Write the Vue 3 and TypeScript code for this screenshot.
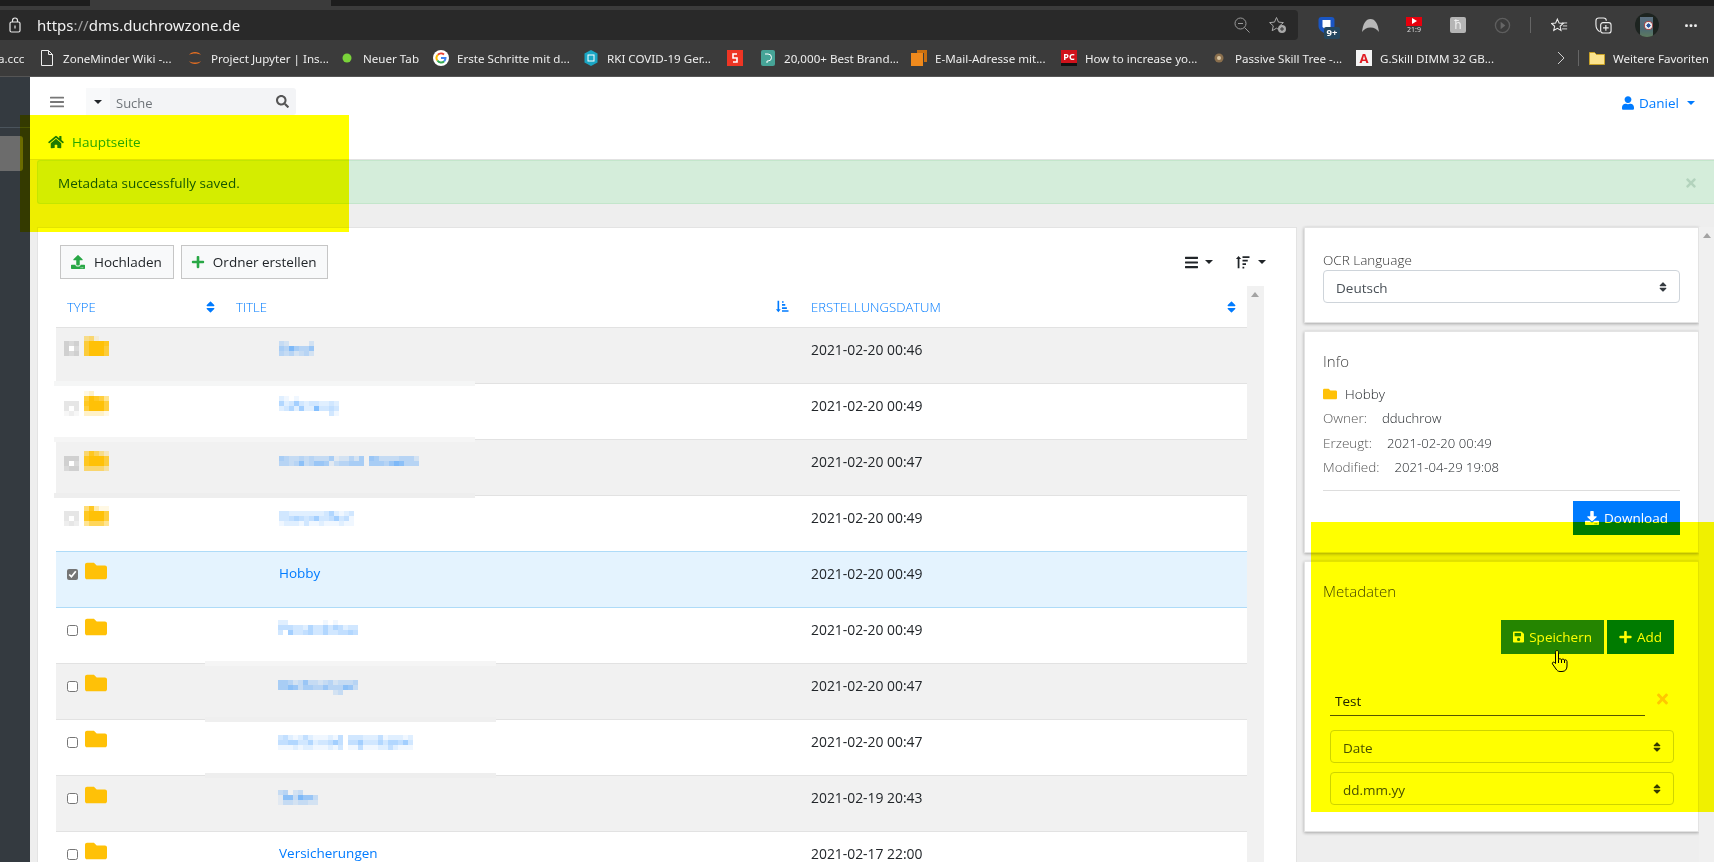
<template>
  <div class="screen">
    <!-- browser chrome -->
    <header class="chrome">
      <div class="tabs">
        <span class="tab-dark tab-first" />
        <span class="tab-active" />
        <span class="tab-dark" />
      </div>
      <div class="toolbar">
        <div class="address">
          <svg class="lock" viewBox="0 0 12 16"><rect x="1" y="5" width="10" height="10" rx="1.5" fill="none" stroke="#e8e8e8" stroke-width="1.2" /><path d="M3.5 5V3.5a2.5 2.5 0 0 1 5 0V5" fill="none" stroke="#e8e8e8" stroke-width="1.2" /><rect x="5.4" y="8.5" width="1.2" height="3" fill="#e8e8e8" /></svg>
          <span class="url">https<span class="url-dim">://</span>dms.duchrowzone.de</span>
          <svg class="addr-zoom" viewBox="0 0 16 16"><circle cx="6.5" cy="6.5" r="5.5" fill="none" stroke="#9a9a9a" /><path d="M4 6.5h5M10.5 10.5l5 5" stroke="#9a9a9a" fill="none" /></svg>
          <svg class="addr-star" viewBox="0 0 18 18"><path d="M7.5 1.5l2 4.6 4.9.5-3.7 3.3 1.1 4.8-4.3-2.5-4.3 2.5 1.1-4.8L.6 6.6l4.9-.5z" fill="none" stroke="#a8a8a8" /><circle cx="13" cy="13" r="4" fill="#a8a8a8" /><path d="M11 13h4M13 11v4" stroke="#333" /></svg>
        </div>
        <div class="ext-icons">
          <span class="ext">
            <svg viewBox="0 0 16 17" class="ext-svg"><path d="M3 0h10a3 3 0 0 1 3 3v6c0 4-4 6.500-8 8-4-1.500-8-4-8-8V3a3 3 0 0 1 3-3z" fill="#1a56c4" /><path d="M4 3h8v7l-4 3-4-3z" fill="#fff" /></svg>
            <span class="ext-badge">9+</span>
          </span>
          <span class="ext"><svg viewBox="0 0 18 16" class="ext-svg"><path d="M0 15C1 6 4 1 9 1s8 5 9 14c-2-3-5-5-9-5s-7 2-9 5z" fill="#b8b8b8" /></svg></span>
          <span class="ext">
            <span class="yt"><span class="yt-head"><i /></span><span class="yt-num">21:9</span></span>
          </span>
          <span class="ext"><span class="h-icon">ћ</span></span>
          <span class="ext"><svg viewBox="0 0 18 18" class="ext-svg"><circle cx="9" cy="9" r="7.5" fill="none" stroke="#5e5e5e" stroke-width="1.4" /><path d="M7 5l5 4-5 4z" fill="#666" /></svg></span>
          <span class="ext-sep" />
          <span class="ext"><svg viewBox="0 0 20 18" class="ext-svg"><path d="M7.5 1.5l2 4.6 4.9.5-3.7 3.3 1.1 4.8-4.3-2.5-4.3 2.5 1.1-4.8L.6 6.6l4.9-.5z" fill="none" stroke="#eee" stroke-width="1.2" /><path d="M13 6h6M14 9.500h5M13 13h6" stroke="#eee" /></svg></span>
          <span class="ext"><svg viewBox="0 0 18 18" class="ext-svg"><path d="M5 15.500C2 14 1 12 1 8V4a3 3 0 0 1 3-3h5a3 3 0 0 1 3 3" fill="none" stroke="#eee" stroke-width="1.2" /><rect x="6" y="6" width="11" height="11" rx="2.500" fill="#3b3b3b" stroke="#eee" stroke-width="1.2" /><path d="M11.500 8.500v6M8.500 11.500h6" stroke="#eee" stroke-width="1.2" /></svg></span>
          <span class="ext"><span class="avatar"><i class="avatar-body" /><i class="avatar-shield" /></span></span>
          <span class="ext dots">···</span>
        </div>
      </div>
      <div class="favorites">
        <div class="fav-list">
          <span class="fav fav-clip">a.ccc</span>
          <span v-for="fav in favorites" :key="fav.icon" class="fav" :style="{ width: fav.width + 'px' }">
            <svg v-if="fav.icon === 'doc'" class="fav-icon" viewBox="0 0 16 16"><path d="M2.500.500h7l4 4v11h-11z" fill="none" stroke="#eee" /><path d="M9.500.500v4h4" fill="none" stroke="#eee" /></svg>
            <svg v-else-if="fav.icon === 'jupyter'" class="fav-icon" viewBox="0 0 16 16"><path d="M2 5c2-4 10-4 12 0-3-2-9-2-12 0zM2 11c2 4 10 4 12 0-3 2-9 2-12 0z" fill="#e66f22" /></svg>
            <svg v-else-if="fav.icon === 'dot'" class="fav-icon" viewBox="0 0 16 16"><circle cx="8" cy="8" r="4.500" fill="#7ad33a" /></svg>
            <svg v-else-if="fav.icon === 'google'" class="fav-icon" viewBox="0 0 16 16"><circle cx="8" cy="8" r="8" fill="#fff" /><path d="M4.900 4.700a4.500 4.500 0 0 1 6.100-.2" fill="none" stroke="#ea4335" stroke-width="2" /><path d="M4.400 10.500a4.500 4.500 0 0 1 .5-5.800" fill="none" stroke="#fbbc05" stroke-width="2" /><path d="M11.200 11.200a4.500 4.500 0 0 1-6.800-.7" fill="none" stroke="#34a853" stroke-width="2" /><path d="M8 8h4.500c0 1.300-.5 2.400-1.300 3.200" fill="none" stroke="#4285f4" stroke-width="2" /></svg>
            <svg v-else-if="fav.icon === 'rki'" class="fav-icon" viewBox="0 0 16 16"><path d="M8 0l6.500 3.500v9L8 16l-6.500-3.500v-9z" fill="#1aa6c4" /><rect x="5" y="5" width="6" height="6" fill="none" stroke="#fff" /></svg>
            <svg v-else-if="fav.icon === 'red'" class="fav-icon" viewBox="0 0 16 16"><rect width="16" height="16" fill="#ee3524" /><path d="M10 4H6v4h4v4H6" fill="none" stroke="#fff" stroke-width="1.600" /></svg>
            <svg v-else-if="fav.icon === 'teal'" class="fav-icon" viewBox="0 0 16 16"><rect x="1" width="14" height="16" rx="2" fill="#46a497" /><path d="M5 4h3a3 3 0 0 1 0 7H7v2" fill="none" stroke="#fff" /></svg>
            <svg v-else-if="fav.icon === 'orange'" class="fav-icon" viewBox="0 0 16 16"><path d="M6 0h10v12h-3V3H6z" fill="#c96f10" /><rect y="3" width="12" height="13" fill="#f08a1d" /></svg>
            <span v-else-if="fav.icon === 'pc'" class="fav-pc">PC</span>
            <svg v-else-if="fav.icon === 'skill'" class="fav-icon" viewBox="0 0 16 16"><circle cx="8" cy="8" r="4.500" fill="#8a6f4d" /><circle cx="8" cy="8" r="2" fill="#d8c4a0" /></svg>
            <span v-else-if="fav.icon === 'adobe'" class="fav-a">A</span>
            <span class="fav-label">{{ fav.label }}</span>
          </span>
        </div>
        <div class="fav-end">
          <svg class="fav-chevron" viewBox="0 0 8 14"><path d="M1 1l6 6-6 6" fill="none" stroke="#d0d0d0" /></svg>
          <span class="fav-sep" />
          <svg class="fav-icon" viewBox="0 0 16 16"><path d="M.500 2.500h5l2 2h8v10h-15z" fill="#fbe38e" stroke="#c9a227" /></svg>
          <span class="fav-label">Weitere Favoriten</span>
        </div>
      </div>
    </header>

    <div class="app">
      <aside class="sidebar">
        <div class="side-line" />
        <div class="side-item" />
      </aside>

      <div class="wrapper">
        <nav class="navbar">
          <svg class="nav-bars" viewBox="0 0 448 512" preserveAspectRatio="none"><path :d="icons.bars" /></svg>
          <div class="search">
            <span class="search-drop"><i class="caret caret-dark" /></span>
            <span class="search-text">Suche</span>
            <svg class="search-icon" viewBox="0 0 512 512"><path :d="icons.search" /></svg>
          </div>
          <a class="user">
            <svg viewBox="0 0 448 512"><path :d="icons.user" /></svg>
            <span>Daniel</span>
            <i class="caret caret-blue" />
          </a>
        </nav>

        <div class="breadcrumb">
          <svg viewBox="0 0 576 512"><path :d="icons.home" /></svg>
          <span>Hauptseite</span>
        </div>

        <div class="content">
          <div class="alert">
            <span>Metadata successfully saved.</span>
            <svg class="alert-close" viewBox="0 0 352 512"><path :d="icons.times" /></svg>
          </div>

          <div class="columns">
            <section class="card main-card">
              <div class="actions">
                <button class="btn-light btn-upload" type="button">
                  <svg class="icon-green" viewBox="0 0 512 512"><path :d="icons.upload" /></svg>
                  Hochladen
                </button>
                <button class="btn-light btn-folder" type="button">
                  <svg class="icon-green" viewBox="0 0 448 512"><path :d="icons.plus" /></svg>
                  Ordner erstellen
                </button>
                <span class="view-tools">
                  <svg class="tool-bars" viewBox="0 0 448 512"><path :d="icons.bars" /></svg>
                  <i class="caret caret-dark" />
                  <svg class="tool-sort" viewBox="0 0 16 16"><path d="M3.500 1l3 3.500H4.500V15h-2V4.500H.500zM8 1.500h8v2H8zM8 5.500h6v2H8zM8 9.500h4v2H8zM8 13.500h2v2H8z" /></svg>
                  <i class="caret caret-dark" />
                </span>
              </div>

              <div class="table-wrap">
                <div class="table">
                  <div class="thead">
                    <div class="th">TYPE<svg class="sort" viewBox="0 0 320 512"><path :d="icons.sort" /></svg></div>
                    <div class="th th-title">TITLE<svg class="sort-desc" viewBox="0 0 16 16"><path d="M3.500 15l3-3.500H4.500V1h-2v10.500H.500zM8 1.500h2v2H8zM8 5h4v2H8zM8 9h6v2H8zM8 12.500h8v2H8z" /></svg></div>
                    <div class="th">ERSTELLUNGSDATUM<svg class="sort" viewBox="0 0 320 512"><path :d="icons.sort" /></svg></div>
                  </div>
                  <div
                    v-for="(row, i) in rows"
                    :key="i"
                    class="tr"
                    :class="{ striped: i % 2 === 0 && !row.selected, selected: row.selected, 'after-selected': row.afterSelected }"
                  >
                    <div class="td td-type">
                      <template v-if="!row.blurType">
                        <input class="check" type="checkbox" :checked="row.selected" />
                        <svg class="folder" viewBox="0 0 512 512"><path :d="icons.folder" /></svg>
                      </template>
                    </div>
                    <div class="td td-title"><a v-if="row.title">{{ row.title }}</a></div>
                    <div class="td td-date">{{ row.date }}</div>
                    <span
                      v-for="(m, j) in row.mosaics"
                      :key="j"
                      class="mosaic"
                      :style="{ left: m.x - 56 + 'px', top: m.y - row.top - 1 + 'px', gridTemplateColumns: `repeat(${m.data[0].length}, 5px)` }"
                    >
                      <i v-for="(c, k) in mosaicCells(m)" :key="k" :style="{ background: c }" />
                    </span>
                    <span
                      v-if="row.patch"
                      class="patch"
                      :style="{ left: row.patch.left + 'px', width: row.patch.width + 'px', background: row.patch.color }"
                    />
                  </div>
                </div>
                <div class="inner-scroll"><i class="scroll-up" /></div>
              </div>
            </section>

            <div class="side-cards">
              <section class="card ocr-card">
                <label class="label">OCR Language</label>
                <div class="select">
                  <span>Deutsch</span>
                  <svg viewBox="0 0 320 512"><path :d="icons.sort" /></svg>
                </div>
              </section>

              <section class="card info-card">
                <h5 class="card-title">Info</h5>
                <div class="info-name">
                  <svg class="folder-small" viewBox="0 0 512 512"><path :d="icons.folder" /></svg>
                  <span>Hobby</span>
                </div>
                <div v-for="item in info" :key="item.label" class="info-line">
                  <span class="info-label">{{ item.label }}</span>
                  <span class="info-value">{{ item.value }}</span>
                </div>
                <hr class="divider" />
                <div class="btn-end">
                  <button class="btn-primary" type="button">
                    <svg viewBox="0 0 512 512"><path :d="icons.download" /></svg>
                    Download
                  </button>
                </div>
              </section>

              <section class="card meta-card">
                <h5 class="card-title">Metadaten</h5>
                <div class="meta-actions">
                  <button class="btn-primary btn-save" type="button">
                    <svg viewBox="0 0 448 512"><path :d="icons.save" /></svg>
                    Speichern
                  </button>
                  <button class="btn-primary btn-add" type="button">
                    <svg viewBox="0 0 448 512"><path :d="icons.plus" /></svg>
                    Add
                  </button>
                </div>
                <div class="meta-form">
                  <div class="meta-name">
                    <span class="meta-input">Test</span>
                    <svg class="meta-x" viewBox="0 0 352 512"><path :d="icons.times" /></svg>
                  </div>
                  <div class="select select-meta">
                    <span>Date</span>
                    <svg viewBox="0 0 320 512"><path :d="icons.sort" /></svg>
                  </div>
                  <div class="select select-meta">
                    <span>dd.mm.yy</span>
                    <svg viewBox="0 0 320 512"><path :d="icons.sort" /></svg>
                  </div>
                </div>
              </section>
            </div>

            <div class="page-scroll"><i class="scroll-up" /></div>
          </div>
        </div>
      </div>
    </div>

    <!-- cursor and marker highlights lie over the screenshot -->
    <svg class="cursor" viewBox="0 0 18 24">
      <path d="M6 1.500c1 0 1.500.7 1.500 1.700v7.300c.5-1 2.500-1 3 .2.700-.9 2.500-.8 3 .4.800-.6 2.500-.2 2.500 1.400v4.500c0 3-1.500 5.500-5 5.500H9c-2 0-3-1-4-2.500L1.500 15c-.8-1.200.8-2.500 2-1.500l1 1V3.200C4.500 2.200 5 1.500 6 1.500z" fill="#fff" stroke="#000" />
      <path d="M7.500 10.500V14M10.500 10.700V14M13.500 11V14" stroke="#000" fill="none" />
    </svg>
    <div class="marker marker-left" />
    <div class="marker marker-right" />
  </div>
</template>

<script setup lang="ts">
interface Mosaic {
  x: number
  y: number
  color: 'blue' | 'amber' | 'grey'
  data: string[]
}

interface Row {
  top: number
  title?: string
  date: string
  selected?: boolean
  afterSelected?: boolean
  blurType?: boolean
  mosaics: Mosaic[]
  patch?: { left: number; width: number; color: string }
}

const icons = {
  bars: 'M16 132h416c8.837 0 16-7.163 16-16V76c0-8.837-7.163-16-16-16H16C7.163 60 0 67.163 0 76v40c0 8.837 7.163 16 16 16zm0 160h416c8.837 0 16-7.163 16-16v-40c0-8.837-7.163-16-16-16H16c-8.837 0-16 7.163-16 16v40c0 8.837 7.163 16 16 16zm0 160h416c8.837 0 16-7.163 16-16v-40c0-8.837-7.163-16-16-16H16c-8.837 0-16 7.163-16 16v40c0 8.837 7.163 16 16 16z',
  search: 'M505 442.7L405.3 343c-4.5-4.5-10.6-7-17-7H372c27.6-35.3 44-79.7 44-128C416 93.1 322.9 0 208 0S0 93.1 0 208s93.1 208 208 208c48.3 0 92.7-16.4 128-44v16.3c0 6.4 2.5 12.5 7 17l99.7 99.7c9.4 9.4 24.6 9.4 33.9 0l28.3-28.3c9.4-9.4 9.4-24.6.1-34zM208 336c-70.7 0-128-57.2-128-128 0-70.7 57.2-128 128-128 70.7 0 128 57.2 128 128 0 70.7-57.2 128-128 128z',
  user: 'M224 256c70.7 0 128-57.3 128-128S294.7 0 224 0 96 57.3 96 128s57.3 128 128 128zm89.6 32h-16.7c-22.2 10.2-46.9 16-72.9 16s-50.6-5.8-72.9-16h-16.7C60.2 288 0 348.2 0 422.4V464c0 26.5 21.5 48 48 48h352c26.5 0 48-21.5 48-48v-41.6c0-74.2-60.2-134.4-134.4-134.4z',
  home: 'M280.37 148.26L96 300.11V464a16 16 0 0 0 16 16l112.06-.29a16 16 0 0 0 15.92-16V368a16 16 0 0 1 16-16h64a16 16 0 0 1 16 16v95.64a16 16 0 0 0 16 16.05L464 480a16 16 0 0 0 16-16V300L295.67 148.26a12.19 12.19 0 0 0-15.3 0zM571.6 251.47L488 182.56V44.05a12 12 0 0 0-12-12h-56a12 12 0 0 0-12 12v72.61L318.47 43a48 48 0 0 0-61 0L4.34 251.47a12 12 0 0 0-1.6 16.9l25.5 31A12 12 0 0 0 45.15 301l235.22-193.74a12.19 12.19 0 0 1 15.3 0L530.9 301a12 12 0 0 0 16.9-1.6l25.5-31a12 12 0 0 0-1.7-16.93z',
  times: 'M242.72 256l100.07-100.07c12.28-12.28 12.28-32.19 0-44.48l-22.24-22.24c-12.28-12.28-32.19-12.28-44.48 0L176 189.28 75.93 89.21c-12.28-12.28-32.19-12.28-44.48 0L9.21 111.45c-12.28 12.28-12.28 32.19 0 44.48L109.28 256 9.21 356.07c-12.28 12.28-12.28 32.19 0 44.48l22.24 22.24c12.28 12.28 32.2 12.28 44.48 0L176 322.72l100.07 100.07c12.28 12.28 32.2 12.28 44.48 0l22.24-22.24c12.28-12.28 12.28-32.19 0-44.48L242.72 256z',
  upload: 'M296 384h-80c-13.3 0-24-10.7-24-24V192h-87.7c-17.8 0-26.7-21.5-14.1-34.1L242.3 5.7c7.5-7.5 19.8-7.5 27.3 0l152.2 152.2c12.6 12.6 3.7 34.1-14.1 34.1H320v168c0 13.3-10.7 24-24 24zm216-8v112c0 13.3-10.7 24-24 24H24c-13.3 0-24-10.7-24-24V376c0-13.3 10.7-24 24-24h136v8c0 30.9 25.1 56 56 56h80c30.9 0 56-25.1 56-56v-8h136c13.3 0 24 10.7 24 24zm-124 88c0-11-9-20-20-20s-20 9-20 20 9 20 20 20 20-9 20-20zm64 0c0-11-9-20-20-20s-20 9-20 20 9 20 20 20 20-9 20-20z',
  download: 'M216 0h80c13.3 0 24 10.7 24 24v168h87.7c17.8 0 26.7 21.5 14.1 34.1L269.7 378.3c-7.5 7.5-19.8 7.5-27.3 0L90.1 226.1c-12.6-12.6-3.7-34.1 14.1-34.1H192V24c0-13.3 10.7-24 24-24zm296 376v112c0 13.3-10.7 24-24 24H24c-13.3 0-24-10.7-24-24V376c0-13.3 10.7-24 24-24h146.7l49 49c20.1 20.1 52.5 20.1 72.6 0l49-49H488c13.3 0 24 10.7 24 24zm-124 88c0-11-9-20-20-20s-20 9-20 20 9 20 20 20 20-9 20-20zm64 0c0-11-9-20-20-20s-20 9-20 20 9 20 20 20 20-9 20-20z',
  plus: 'M416 208H272V64c0-17.67-14.33-32-32-32h-32c-17.67 0-32 14.33-32 32v144H32c-17.67 0-32 14.33-32 32v32c0 17.67 14.33 32 32 32h144v144c0 17.67 14.33 32 32 32h32c17.67 0 32-14.33 32-32V304h144c17.67 0 32-14.33 32-32v-32c0-17.67-14.33-32-32-32z',
  save: 'M433.941 129.941l-83.882-83.882A48 48 0 0 0 316.118 32H48C21.49 32 0 53.49 0 80v352c0 26.51 21.49 48 48 48h352c26.51 0 48-21.49 48-48V163.882a48 48 0 0 0-14.059-33.941zM224 416c-35.346 0-64-28.654-64-64 0-35.346 28.654-64 64-64s64 28.654 64 64c0 35.346-28.654 64-64 64zm96-304.52V212c0 6.627-5.373 12-12 12H76c-6.627 0-12-5.373-12-12V108c0-6.627 5.373-12 12-12h228.52c3.183 0 6.235 1.264 8.485 3.515l3.48 3.48A11.996 11.996 0 0 1 320 111.48z',
  sort: 'M41 288h238c21.4 0 32.1 25.9 17 41L177 448c-9.4 9.4-24.6 9.4-33.9 0L24 329c-15.1-15.1-4.4-41 17-41zm255-105L177 64c-9.4-9.4-24.6-9.4-33.9 0L24 183c-15.1 15.1-4.4 41 17 41h238c21.4 0 32.1-25.9 17-41z',
  folder: 'M464 128H272l-64-64H48C21.49 64 0 85.49 0 112v288c0 26.51 21.49 48 48 48h416c26.51 0 48-21.49 48-48V176c0-26.51-21.49-48-48-48z'
}

// width = distance to the next bookmark in the bar
const favorites = [
  { icon: 'doc', label: 'ZoneMinder Wiki -...', width: 148 },
  { icon: 'jupyter', label: 'Project Jupyter | Ins...', width: 152 },
  { icon: 'dot', label: 'Neuer Tab', width: 94 },
  { icon: 'google', label: 'Erste Schritte mit d...', width: 150 },
  { icon: 'rki', label: 'RKI COVID-19 Ger...', width: 144 },
  { icon: 'red', label: '', width: 33 },
  { icon: 'teal', label: '20,000+ Best Brand...', width: 151 },
  { icon: 'orange', label: 'E-Mail-Adresse mit...', width: 150 },
  { icon: 'pc', label: 'How to increase yo...', width: 150 },
  { icon: 'skill', label: 'Passive Skill Tree -...', width: 145 },
  { icon: 'adobe', label: 'G.Skill DIMM 32 GB...', width: 150 }
]

const info = [
  { label: 'Owner:', value: 'dduchrow' },
  { label: 'Erzeugt:', value: '2021-02-20 00:49' },
  { label: 'Modified:', value: '2021-04-29 19:08' }
]

const rows: Row[] = [
  {
    top: 327,
    date: '2021-02-20 00:46',
    blurType: true,
    patch: { left: -2, width: 421, color: '#f5f6f6' },
    mosaics: [
      { x: 64, y: 341, color: 'grey', data: ['434', '403', '434'] },
      { x: 84, y: 336, color: 'amber', data: ['45100', '79998', '79997', '79997'] },
      { x: 279, y: 341, color: 'blue', data: ['3200002', '5485446', '4342342'] }
    ]
  },
  {
    top: 383,
    date: '2021-02-20 00:49',
    blurType: true,
    patch: { left: -2, width: 421, color: '#f5f5f5' },
    mosaics: [
      { x: 64, y: 401, color: 'grey', data: ['333', '303', '121'] },
      { x: 84, y: 391, color: 'amber', data: ['12000', '79874', '89997', '79997', '22221'] },
      { x: 279, y: 396, color: 'blue', data: ['210100000000', '523632332232', '235262283343', '000000000031'] }
    ]
  },
  {
    top: 439,
    date: '2021-02-20 00:47',
    blurType: true,
    patch: { left: -2, width: 421, color: '#eeeeee' },
    mosaics: [
      { x: 64, y: 456, color: 'grey', data: ['444', '403', '344'] },
      { x: 84, y: 451, color: 'amber', data: ['58642', '89997', '89997', '55553'] },
      { x: 279, y: 456, color: 'blue', data: ['5433434333512242506533334442', '4434734665134455505554687444'] }
    ]
  },
  {
    top: 495,
    date: '2021-02-20 00:49',
    blurType: true,
    mosaics: [
      { x: 64, y: 511, color: 'grey', data: ['333', '303', '232'] },
      { x: 84, y: 506, color: 'amber', data: ['58311', '89997', '89997', '46664'] },
      { x: 279, y: 511, color: 'blue', data: ['332222222352123', '334543463346341', '122213112111211'] }
    ]
  },
  { top: 551, title: 'Hobby', date: '2021-02-20 00:49', selected: true, mosaics: [] },
  {
    top: 607,
    date: '2021-02-20 00:49',
    afterSelected: true,
    patch: { left: 149, width: 291, color: '#f5f5f5' },
    mosaics: [{ x: 278, y: 620, color: 'blue', data: ['2200000001010000', '4443325335354233', '3063345335334454'] }]
  },
  {
    top: 663,
    date: '2021-02-20 00:47',
    patch: { left: 149, width: 291, color: '#efefef' },
    mosaics: [{ x: 278, y: 680, color: 'blue', data: ['5542363323423334', '5576355446444763', '0000000000023000'] }]
  },
  {
    top: 719,
    date: '2021-02-20 00:47',
    patch: { left: 149, width: 291, color: '#eeeeee' },
    mosaics: [
      {
        x: 278,
        y: 735,
        color: 'blue',
        data: ['342124211121403332224122212', '445533523346404463335355463', '111212211121301141112242111']
      }
    ]
  },
  {
    top: 775,
    date: '2021-02-19 20:43',
    mosaics: [{ x: 278, y: 790, color: 'blue', data: ['34023000', '17738663', '13323322'] }]
  },
  { top: 831, title: 'Versicherungen', date: '2021-02-17 22:00', mosaics: [] }
]

// one colour per pixel of a blurred block, digit 0-9 is the strength
const mosaicCells = (m: Mosaic) => {
  const out: string[] = []
  for (const line of m.data) {
    for (const ch of line) {
      const d = Number(ch)
      if (m.color === 'blue') out.push(d === 0 ? 'transparent' : `rgba(0, 123, 255, ${d * 0.06})`)
      else if (m.color === 'amber') out.push(d === 0 ? 'transparent' : `rgba(255, 193, 7, ${d / 9})`)
      else out.push(d === 0 ? '#fff' : `rgba(0, 0, 0, ${d * 0.033})`)
    }
  }
  return out
}
</script>

<style>
html,
body {
  margin: 0;
  background: #fff;
}
</style>

<style scoped>
.screen {
  position: relative;
  width: 1714px;
  height: 862px;
  overflow: hidden;
  background: #fff;
  font-family: "Open Sans", "Noto Sans", sans-serif;
  font-size: 13.5px;
  color: #212529;
}

/* browser chrome */
.chrome {
  background: #3b3b3b;
  border-bottom: 1px solid #555;
  color: #eee;
  font-family: "Noto Sans", "Open Sans", sans-serif;
}

.tabs {
  display: flex;
  height: 6px;
  background: #1d1d1d;
  margin-bottom: 4px;
}

.tab-dark {
  flex: 1;
  background: #1d1d1d;
}

.tab-first {
  flex: 0 0 90px;
}

.tab-active {
  flex: 0 0 241px;
  background: #3b3b3b;
}

.toolbar {
  display: flex;
  height: 30px;
}

.address {
  display: flex;
  align-items: center;
  width: 1298px;
  background: #292929;
  border-radius: 0 4px 4px 0;
  padding-left: 9px;
  box-sizing: border-box;
}

.lock {
  width: 12px;
  height: 16px;
}

.url {
  margin-left: 16px;
  font-size: 15px;
  color: #f2f2f2;
}

.url-dim {
  color: #a0a0a0;
}

.addr-zoom {
  width: 16px;
  height: 16px;
  margin-left: auto;
}

.addr-star {
  width: 18px;
  height: 18px;
  margin: 0 11px 0 19px;
}

.ext-icons {
  display: flex;
  align-items: center;
  margin-left: 6px;
}

.ext {
  position: relative;
  display: flex;
  align-items: center;
  justify-content: center;
  width: 44px;
  height: 30px;
}

.ext-svg {
  width: 17px;
  height: 17px;
}

.ext-badge {
  position: absolute;
  left: 20px;
  top: 17px;
  width: 16px;
  height: 12px;
  background: #24475f;
  border-radius: 2px;
  font-size: 9.5px;
  font-weight: 700;
  line-height: 12px;
  text-align: center;
  color: #fff;
}

.yt {
  display: flex;
  flex-direction: column;
  align-items: center;
  width: 16px;
}

.yt-head {
  display: flex;
  align-items: center;
  justify-content: center;
  width: 16px;
  height: 9px;
  background: #e8000d;
}

.yt-head i {
  border-left: 5px solid #fff;
  border-top: 3px solid transparent;
  border-bottom: 3px solid transparent;
}

.yt-num {
  font-size: 7px;
  line-height: 8px;
  color: #ddd;
}

.h-icon {
  display: block;
  width: 16px;
  height: 16px;
  background: #b5b5b5;
  border-radius: 2px;
  color: #eee;
  font-size: 12px;
  line-height: 16px;
  text-align: center;
}

.ext-sep {
  width: 1px;
  height: 16px;
  margin: 0 6px 0 6px;
  background: #666;
}

.avatar {
  position: relative;
  display: block;
  width: 24px;
  height: 24px;
  border-radius: 50%;
  overflow: hidden;
  background: #1d2420;
}

.avatar-body {
  position: absolute;
  left: 5px;
  top: 4px;
  width: 13px;
  height: 20px;
  background: linear-gradient(#5c6f80, #4d6a73 60%, #5d7a5e);
}

.avatar-shield {
  position: absolute;
  left: 9px;
  top: 8px;
  width: 9px;
  height: 9px;
  border-radius: 50%;
  background: radial-gradient(#2d5aa0 30%, #e8e8e8 35%, #e8e8e8 55%, #b04a4a 60%);
}

.dots {
  font-size: 16px;
  font-weight: 700;
  color: #eee;
}

.favorites {
  display: flex;
  align-items: center;
  justify-content: space-between;
  height: 36px;
  font-size: 11.6px;
}

.fav-list {
  display: flex;
  align-items: center;
  margin-left: -2px;
}

.fav {
  display: flex;
  flex: none;
  align-items: center;
  gap: 8px;
  white-space: nowrap;
  box-sizing: border-box;
}

.fav-clip {
  width: 41px;
}

.fav-icon {
  flex: none;
  width: 16px;
  height: 16px;
}

.fav-pc {
  display: block;
  width: 16px;
  height: 16px;
  background: #d0121b;
  color: #fff;
  font-size: 9px;
  font-weight: 700;
  line-height: 13px;
  text-align: center;
  border-bottom: 3px solid #111;
  box-sizing: border-box;
}

.fav-a {
  display: block;
  width: 16px;
  height: 16px;
  background: #f4f4f4;
  color: #e01b22;
  font-size: 13px;
  font-weight: 700;
  line-height: 16px;
  text-align: center;
}

.fav-end {
  display: flex;
  flex: none;
  align-items: center;
  gap: 8px;
  padding-right: 5px;
  white-space: nowrap;
}

.fav-chevron {
  width: 8px;
  height: 14px;
}

.fav-sep {
  width: 1px;
  height: 16px;
  margin: 0 2px 0 5px;
  background: #666;
}

/* app shell */
.app {
  display: flex;
  height: 785px;
}

.sidebar {
  flex: 0 0 30px;
  background: #343a40;
}

.side-line {
  height: 1px;
  margin-top: 50px;
  background: #4b545c;
}

.side-item {
  width: 23px;
  height: 35px;
  margin-top: 8px;
  background: #6c6c6c;
  border-radius: 0 3px 3px 0;
}

.wrapper {
  flex: 1;
  min-width: 0;
  display: flex;
  flex-direction: column;
}

.navbar {
  display: flex;
  align-items: center;
  height: 38px;
  padding: 11px 0 0 20px;
  box-sizing: border-box;
}

.nav-bars {
  width: 14px;
  height: 14px;
  fill: #777;
}

.search {
  display: flex;
  align-items: center;
  width: 210px;
  height: 27px;
  margin-left: 22px;
  background: #f3f4f6;
  border-radius: 3px;
}

.search-drop {
  display: flex;
  align-items: center;
  justify-content: center;
  width: 24px;
  height: 27px;
  background: #f8f9fa;
}

.search-text {
  margin-left: 6px;
  padding-top: 2px;
  color: #6f7479;
  font-size: 13px;
}

.search-icon {
  width: 13px;
  height: 13px;
  margin: 0 7px 0 auto;
  fill: #555;
}

.caret {
  display: inline-block;
  border-left: 4px solid transparent;
  border-right: 4px solid transparent;
  border-top: 4px solid #212529;
}

.caret-blue {
  border-top-color: #007bff;
  margin-left: 8px;
}

.user {
  display: flex;
  align-items: center;
  margin: 2px 19px 0 auto;
  color: #007bff;
  font-size: 13.5px;
}

.user svg {
  width: 12px;
  height: 14px;
  margin-right: 5px;
  fill: #007bff;
}

.breadcrumb {
  display: flex;
  align-items: center;
  height: 45px;
  padding: 9px 0 0 18px;
  box-sizing: border-box;
  color: #28a745;
  border-bottom: 1px solid #e2e2e2;
}

.breadcrumb svg {
  width: 16px;
  height: 14px;
  margin-right: 8px;
  fill: #1c7a35;
}

.content {
  flex: 1;
  min-height: 0;
  padding-left: 7px;
  background: #eee;
}

.alert {
  display: flex;
  align-items: center;
  justify-content: space-between;
  height: 44px;
  box-sizing: border-box;
  padding: 1px 18px 0 20px;
  background: #d4edda;
  border: 1px solid #c3e6cb;
  border-right: 0;
  border-radius: 3px 0 0 3px;
  color: #155724;
}

.alert-close {
  width: 10px;
  height: 14px;
  fill: #b3d3bd;
}

.columns {
  display: flex;
  gap: 7px;
  margin-top: 23px;
  align-items: flex-start;
}

.card {
  background: #fff;
  border: 1px solid #e3e3e3;
  box-sizing: border-box;
}

.main-card {
  flex: 0 0 1260px;
  height: 640px;
  padding: 17px 0 0 22px;
}

.actions {
  display: flex;
  align-items: center;
  gap: 7px;
  height: 34px;
}

.btn-light {
  display: flex;
  align-items: center;
  height: 34px;
  background: #f8f9fa;
  border: 1px solid #c6c6c6;
  font: inherit;
  color: #212529;
}

.btn-upload {
  gap: 9px;
  padding: 0 11px 0 10px;
}

.btn-folder {
  gap: 8px;
  padding: 0 10px 0 9px;
}

.icon-green {
  width: 14px;
  height: 14px;
  fill: #28a745;
}

.view-tools {
  display: flex;
  align-items: center;
  margin-left: auto;
  margin-right: 30px;
}

.tool-bars {
  width: 13px;
  height: 15px;
  margin-right: 7px;
  fill: #212529;
}

.tool-sort {
  width: 15px;
  height: 14px;
  margin: 0 8px 0 22px;
  fill: #212529;
}

.table-wrap {
  display: flex;
  margin: 7px 32px 0 -4px;
}

.table {
  width: 1191px;
}

.thead,
.tr {
  position: relative;
  display: grid;
  grid-template-columns: 170px 574px 447px;
}

.thead {
  height: 41px;
}

.th {
  display: flex;
  align-items: center;
  justify-content: space-between;
  padding: 0 11px;
  font-weight: 300;
  font-size: 13.1px;
  color: #007bff;
}

.th-title {
  padding-left: 10px;
}

.sort {
  width: 9px;
  height: 14px;
  fill: #007bff;
}

.sort-desc {
  width: 14px;
  height: 13px;
  fill: #007bff;
}

.tr {
  height: 56px;
  box-sizing: border-box;
  border-top: 1px solid #e2e2e2;
}

.striped {
  background: #f1f1f1;
}

.selected {
  background: #e4f3fe;
  border-top-color: #aedbf8;
}

.after-selected {
  border-top-color: #aedbf8;
}

.td {
  padding: 11px 11px 0;
  line-height: 21px;
}

.td-type {
  display: flex;
  align-items: flex-start;
  gap: 7px;
}

.td-title {
  padding-left: 53px;
}

.td-title a {
  color: #007bff;
}

.td-date {
  font-size: 13.9px;
}

.check {
  width: 11px;
  height: 11px;
  margin: 6px 0 0;
  accent-color: #757575;
}

.folder {
  width: 22px;
  height: 22px;
  margin-top: -3px;
  fill: #ffc107;
}

.mosaic {
  position: absolute;
  display: grid;
  grid-auto-rows: 5px;
}

.patch {
  position: absolute;
  bottom: -3px;
  height: 5px;
  z-index: 1;
}

.inner-scroll {
  position: relative;
  width: 17px;
  background: #f1f1f1;
}

.scroll-up {
  position: absolute;
  left: 4px;
  top: 6px;
  border-left: 4px solid transparent;
  border-right: 4px solid transparent;
  border-bottom: 5px solid #a3a3a3;
}

/* right hand cards */
.side-cards {
  flex: 0 0 395px;
  display: flex;
  flex-direction: column;
  gap: 8px;
}

.side-cards .card {
  padding: 0 18px;
  box-shadow: 0 1px 3px rgba(0, 0, 0, 0.3);
}

.ocr-card {
  height: 96px;
  padding-top: 21px !important;
}

.label {
  display: block;
  height: 21px;
  line-height: 23px;
  font-weight: 300;
  color: #333;
}

.select {
  display: flex;
  align-items: center;
  justify-content: space-between;
  height: 33px;
  padding: 2px 12px 0;
  box-sizing: border-box;
  border: 1px solid #ced4da;
  border-radius: 4px;
  color: #495057;
}

.select svg {
  width: 8px;
  height: 12px;
  margin-top: -2px;
  fill: #343a40;
}

.info-card {
  height: 222px;
}

.card-title {
  margin: 0;
  font-size: 15px;
  font-weight: 300;
  line-height: 20px;
  color: #444;
  padding-top: 19px;
}

.info-name {
  display: flex;
  align-items: center;
  gap: 8px;
  height: 24px;
  margin-top: 11px;
  font-weight: 300;
}

.folder-small {
  width: 14px;
  height: 14px;
  fill: #ffc107;
}

.info-line {
  display: flex;
  gap: 15px;
  height: 24.5px;
  align-items: center;
  font-weight: 300;
}

.info-label {
  color: #555;
}

.info-value {
  font-size: 13.1px;
}

.divider {
  border: 0;
  border-top: 1px solid #ddd;
  margin: 10px 0 10px;
}

.btn-end {
  display: flex;
  justify-content: flex-end;
}

.btn-primary {
  display: flex;
  align-items: center;
  gap: 5px;
  height: 34px;
  padding: 0 12px;
  background: #007bff;
  border: 0;
  color: #fff;
  font: inherit;
}

.btn-primary svg {
  width: 14px;
  height: 14px;
  fill: #fff;
}

.meta-card {
  height: 271px;
}

.meta-actions {
  display: flex;
  justify-content: flex-end;
  gap: 3px;
  margin: 19px 6px 0 0;
}

.btn-save {
  width: 103px;
  background: #2585f0;
}

.btn-add {
  width: 67px;
}

.meta-form {
  margin: 30px 6px 0 7px;
}

.meta-name {
  display: flex;
  align-items: flex-start;
  justify-content: space-between;
}

.meta-input {
  width: 315px;
  height: 32px;
  box-sizing: border-box;
  padding: 8px 5px 0;
  line-height: 18px;
  border-bottom: 1px solid #555;
  color: #212529;
}

.meta-x {
  width: 11px;
  height: 16px;
  margin: 7px 6px 0 0;
  fill: #ffc8c0;
}

.select-meta {
  margin-top: 14px;
}

.select-meta + .select-meta {
  margin-top: 9px;
}

.page-scroll {
  position: relative;
  flex: 0 0 15px;
  height: 640px;
  margin-left: -7px;
  background: #f0f0f0;
}

.page-scroll .scroll-up {
  left: 4px;
}

.cursor {
  position: absolute;
  left: 1551px;
  top: 649px;
  width: 18px;
  height: 24px;
}

.marker {
  position: absolute;
  background: #ff0;
  mix-blend-mode: multiply;
}

.marker-left {
  left: 20px;
  top: 115px;
  width: 329px;
  height: 117px;
}

.marker-right {
  left: 1311px;
  top: 522px;
  width: 403px;
  height: 290px;
}
</style>
